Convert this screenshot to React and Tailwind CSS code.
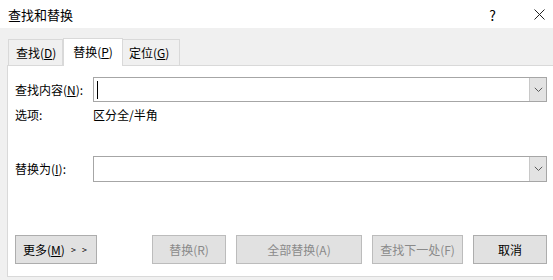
import React from "react";

const font = { fontFamily: '"Noto Sans CJK SC", "Noto Sans", sans-serif' };

function Chevron() {
  return (
    <svg width="9" height="6" viewBox="0 0 9 6" fill="none">
      <path d="M0.8 0.8 L4.5 4.5 L8.2 0.8" stroke="#5a5a5a" strokeWidth="1" />
    </svg>
  );
}

function ComboBox({ caret }) {
  return (
    <div className="flex-1 h-full flex border border-[#a6a6a6] bg-white">
      <div className="flex-1 flex items-center">
        {caret && <div className="ml-[3px] w-px h-[18px] bg-black" />}
      </div>
      <div className="w-[17px] h-full bg-[#e3e3e3] border-l border-[#c8c8c8] flex items-center justify-center">
        <Chevron />
      </div>
    </div>
  );
}

function Btn({ w, disabled, children, extra = "" }) {
  return (
    <div
      className={`${w} h-[29px] flex items-center justify-center border text-[12px] ${
        disabled
          ? "border-[#bcbcbc] bg-[#e1e1e1] text-[#8a8a8a]"
          : "border-[#adadad] bg-[#e1e1e1] text-black"
      } ${extra}`}
    >
      {children}
    </div>
  );
}

export default function App() {
  return (
    <div
      className="w-[553px] h-[280px] bg-[#f0f0f0] flex flex-col overflow-hidden text-black"
      style={font}
    >
      {/* Title bar */}
      <div className="h-[28px] bg-white flex items-center shrink-0">
        <div className="pl-[8px] text-[13px] leading-none">查找和替换</div>
        <div className="flex-1" />
        <div className="text-[14px] leading-none mr-[38px] mt-[1px]">?</div>
        <svg width="11" height="11" viewBox="0 0 11 11" className="mr-[8px]">
          <path d="M0.5 0.5 L10.5 10.5 M10.5 0.5 L0.5 10.5" stroke="#222" strokeWidth="1" />
        </svg>
      </div>

      {/* Tabs */}
      <div className="pt-[10px] pl-[8px] flex items-end shrink-0">
        <div className="w-[55px] h-[26px] border border-b-0 border-[#d9d9d9] bg-[#f0f0f0] flex items-center pl-[7px] text-[12px]">
          查找(<span className="underline">D</span>)
        </div>
        <div className="relative z-10 w-[60px] h-[28px] -mb-px bg-white border border-b-0 border-[#d9d9d9] flex items-center justify-center text-[12px] pb-[2px]">
          替换(<span className="underline">P</span>)
        </div>
        <div className="w-[57px] h-[26px] border border-b-0 border-l-0 border-[#d9d9d9] bg-[#f0f0f0] flex items-center pl-[6px] text-[12px]">
          定位(<span className="underline">G</span>)
        </div>
      </div>

      {/* Panel */}
      <div className="ml-[7px] mr-0 h-[212px] bg-white border border-r-0 border-[#d9d9d9] flex flex-col shrink-0">
        <div className="mt-[11px] h-[25px] flex items-center">
          <div className="w-[85px] pl-[7px] text-[12px]">
            查找内容(<span className="underline">N</span>):
          </div>
          <div className="flex-1 h-full mr-[6px] flex">
            <ComboBox caret />
          </div>
        </div>

        <div className="mt-[3px] h-[20px] flex items-center text-[12px]">
          <div className="w-[85px] pl-[7px]">选项:</div>
          <div>区分全/半角</div>
        </div>

        <div className="mt-[31px] h-[26px] flex items-center">
          <div className="w-[85px] pl-[7px] text-[12px]">
            替换为(<span className="underline">I</span>):
          </div>
          <div className="flex-1 h-full mr-[6px] flex">
            <ComboBox />
          </div>
        </div>

        <div className="mt-[53px] flex pl-[7px]">
          <Btn w="w-[82px]" extra="justify-start pl-[7px]">
            更多(<span className="underline">M</span>)
            <span className="ml-[6px] text-[9px] tracking-[2px]">&gt; &gt;</span>
          </Btn>
          <Btn w="w-[74px]" disabled extra="ml-[55px]">替换(R)</Btn>
          <Btn w="w-[126px]" disabled extra="ml-[10px]">全部替换(A)</Btn>
          <Btn w="w-[91px]" disabled extra="ml-[10px]">查找下一处(F)</Btn>
          <Btn w="w-[74px]" extra="ml-[10px]">取消</Btn>
        </div>
      </div>
    </div>
  );
}
